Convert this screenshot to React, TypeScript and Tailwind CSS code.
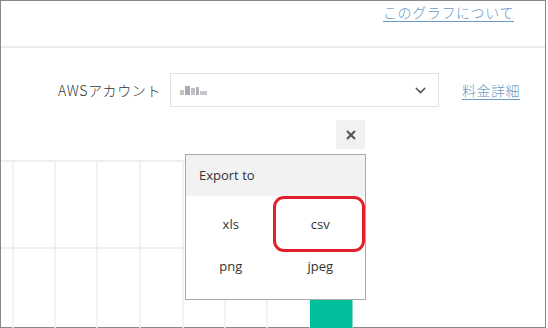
import { ChevronDown, X } from "lucide-react";

const jp = { fontFamily: '"Noto Sans CJK JP", "Noto Sans", sans-serif' };

const gridX = [12, 54, 96, 139, 182, 224, 266, 309, 351];

function ChartGrid() {
    return (
        <svg className="absolute left-0 top-[53px]" width="362" height="168">
            <line x1="0" y1="1" x2="362" y2="1" stroke="#efefef" strokeWidth="2" />
            <line x1="0" y1="88" x2="362" y2="88" stroke="#efefef" strokeWidth="2" />
            {gridX.map((x) => (
                <line key={x} x1={x} y1="0" x2={x} y2="168" stroke="#eeeeee" strokeWidth="1.5" />
            ))}
            <rect x="309" y="139" width="42" height="30" fill="#00bf9a" />
            <line x1="351.5" y1="139" x2="351.5" y2="168" stroke="#7fdcc9" strokeWidth="1" />
        </svg>
    );
}

export default function App() {
    return (
        <div
            className="w-[546px] h-[328px] border border-[#888] bg-white flex flex-col text-[#333]"
            style={jp}
        >

            <div className="h-[47px] border-b-2 border-[#ececec] flex justify-end pr-[31px] pt-[1px] shrink-0">
                <a className="text-[14px] text-[#6e9ac6] underline underline-offset-[3px] leading-[20px] tracking-[0.6px] font-light">
                    このグラフについて
                </a>
            </div>

            <div className="mt-[25px] h-[34px] flex items-center justify-end pr-[25px] shrink-0">

                <span className="text-[14px] mr-[9px] tracking-[0.6px] font-light">
                    AWSアカウント
                </span>

                <div className="w-[269px] h-[34px] border border-[#dfe1e4] flex items-center px-[9px] mr-[23px]">
                    <div className="flex items-end gap-[1px] blur-[0.6px]">
                        <div className="w-[4px] h-[5px] bg-[#c9c3bd]" />
                        <div className="w-[5px] h-[9px] bg-[#a9a9b4]" />
                        <div className="w-[4px] h-[7px] bg-[#bfc0c8]" />
                        <div className="w-[3px] h-[8px] bg-[#b4b2b8]" />
                        <div className="w-[7px] h-[4px] bg-[#c8c7cc]" />
                    </div>
                    <ChevronDown className="ml-auto text-[#555]" size={17} strokeWidth={2} />
                </div>

                <a className="text-[14px] text-[#6e9ac6] underline underline-offset-[3px] tracking-[0.5px] font-light">
                    料金詳細
                </a>

            </div>

            <div className="relative flex-1">

                <ChartGrid />

                <div className="absolute left-[335px] top-[13px] w-[29px] h-[29px] bg-[#f1f1f1] flex items-center justify-center">
                    <X size={14} strokeWidth={3.5} className="text-[#555]" />
                </div>

                <div
                    className="absolute left-[184px] top-[47px] w-[181px] h-[146px] border border-[#aaaaaa] bg-white flex flex-col"
                    style={{ fontFamily: '"Open Sans", "Noto Sans", sans-serif' }}
                >
                    <div className="h-[41px] bg-[#f2f2f2] flex items-center pl-[13px] text-[13px] shrink-0">
                        Export to
                    </div>

                    <div className="grid grid-cols-2 flex-1 text-[13px] pt-[8px] pb-[12px]">
                        <div className="flex items-center justify-center">xls</div>
                        <div className="flex items-center justify-center">csv</div>
                        <div className="flex items-center justify-center">png</div>
                        <div className="flex items-center justify-center">jpeg</div>
                    </div>
                </div>

                <div className="absolute left-[272px] top-[89px] w-[92px] h-[56px] border-[3px] border-[#e61e2a] rounded-[11px]" />

            </div>

        </div>
    );
}
